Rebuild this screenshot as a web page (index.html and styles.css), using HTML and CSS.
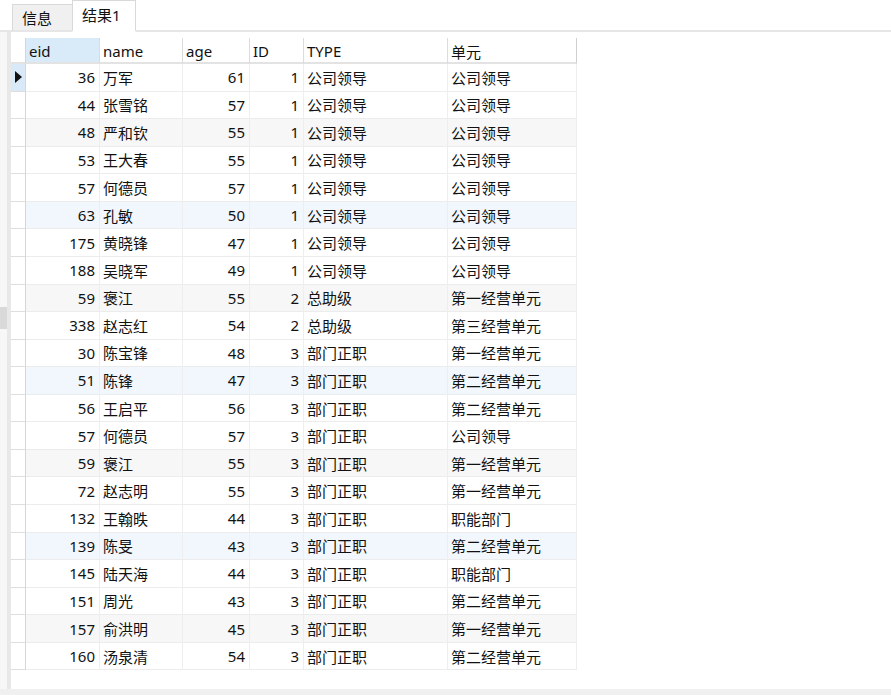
FILE: index.html
```html
<!DOCTYPE html>
<html lang="zh">
<head>
<meta charset="utf-8">
<title>结果1</title>
<link rel="stylesheet" href="styles.css">
</head>
<body>
<div class="app">
  <div class="tabbar">
    <div class="tab">信息</div>
    <div class="tab active">结果1</div>
  </div>
  <div class="main">
    <div class="gutter"><div class="handle"></div></div>
    <div class="panel">
      <div class="grid">
        <div class="row head">
          <div class="c ind"></div>
          <div class="c sel">eid</div>
          <div class="c">name</div>
          <div class="c">age</div>
          <div class="c">ID</div>
          <div class="c">TYPE</div>
          <div class="c">单元</div>
        </div>
        <div class="row"><div class="c ind cur"><span class="tri"></span></div><div class="c num">36</div><div class="c">万军</div><div class="c num">61</div><div class="c num">1</div><div class="c">公司领导</div><div class="c">公司领导</div></div>
        <div class="row"><div class="c ind"></div><div class="c num">44</div><div class="c">张雪铭</div><div class="c num">57</div><div class="c num">1</div><div class="c">公司领导</div><div class="c">公司领导</div></div>
        <div class="row gray"><div class="c ind"></div><div class="c num">48</div><div class="c">严和钦</div><div class="c num">55</div><div class="c num">1</div><div class="c">公司领导</div><div class="c">公司领导</div></div>
        <div class="row"><div class="c ind"></div><div class="c num">53</div><div class="c">王大春</div><div class="c num">55</div><div class="c num">1</div><div class="c">公司领导</div><div class="c">公司领导</div></div>
        <div class="row"><div class="c ind"></div><div class="c num">57</div><div class="c">何德员</div><div class="c num">57</div><div class="c num">1</div><div class="c">公司领导</div><div class="c">公司领导</div></div>
        <div class="row blue"><div class="c ind"></div><div class="c num">63</div><div class="c">孔敏</div><div class="c num">50</div><div class="c num">1</div><div class="c">公司领导</div><div class="c">公司领导</div></div>
        <div class="row"><div class="c ind"></div><div class="c num">175</div><div class="c">黄晓锋</div><div class="c num">47</div><div class="c num">1</div><div class="c">公司领导</div><div class="c">公司领导</div></div>
        <div class="row"><div class="c ind"></div><div class="c num">188</div><div class="c">吴晓军</div><div class="c num">49</div><div class="c num">1</div><div class="c">公司领导</div><div class="c">公司领导</div></div>
        <div class="row gray"><div class="c ind"></div><div class="c num">59</div><div class="c">褒江</div><div class="c num">55</div><div class="c num">2</div><div class="c">总助级</div><div class="c">第一经营单元</div></div>
        <div class="row"><div class="c ind"></div><div class="c num">338</div><div class="c">赵志红</div><div class="c num">54</div><div class="c num">2</div><div class="c">总助级</div><div class="c">第三经营单元</div></div>
        <div class="row"><div class="c ind"></div><div class="c num">30</div><div class="c">陈宝锋</div><div class="c num">48</div><div class="c num">3</div><div class="c">部门正职</div><div class="c">第一经营单元</div></div>
        <div class="row blue"><div class="c ind"></div><div class="c num">51</div><div class="c">陈锋</div><div class="c num">47</div><div class="c num">3</div><div class="c">部门正职</div><div class="c">第二经营单元</div></div>
        <div class="row"><div class="c ind"></div><div class="c num">56</div><div class="c">王启平</div><div class="c num">56</div><div class="c num">3</div><div class="c">部门正职</div><div class="c">第二经营单元</div></div>
        <div class="row"><div class="c ind"></div><div class="c num">57</div><div class="c">何德员</div><div class="c num">57</div><div class="c num">3</div><div class="c">部门正职</div><div class="c">公司领导</div></div>
        <div class="row gray"><div class="c ind"></div><div class="c num">59</div><div class="c">褒江</div><div class="c num">55</div><div class="c num">3</div><div class="c">部门正职</div><div class="c">第一经营单元</div></div>
        <div class="row"><div class="c ind"></div><div class="c num">72</div><div class="c">赵志明</div><div class="c num">55</div><div class="c num">3</div><div class="c">部门正职</div><div class="c">第一经营单元</div></div>
        <div class="row"><div class="c ind"></div><div class="c num">132</div><div class="c">王翰昳</div><div class="c num">44</div><div class="c num">3</div><div class="c">部门正职</div><div class="c">职能部门</div></div>
        <div class="row blue"><div class="c ind"></div><div class="c num">139</div><div class="c">陈旻</div><div class="c num">43</div><div class="c num">3</div><div class="c">部门正职</div><div class="c">第二经营单元</div></div>
        <div class="row"><div class="c ind"></div><div class="c num">145</div><div class="c">陆天海</div><div class="c num">44</div><div class="c num">3</div><div class="c">部门正职</div><div class="c">职能部门</div></div>
        <div class="row"><div class="c ind"></div><div class="c num">151</div><div class="c">周光</div><div class="c num">43</div><div class="c num">3</div><div class="c">部门正职</div><div class="c">第二经营单元</div></div>
        <div class="row gray"><div class="c ind"></div><div class="c num">157</div><div class="c">俞洪明</div><div class="c num">45</div><div class="c num">3</div><div class="c">部门正职</div><div class="c">第一经营单元</div></div>
        <div class="row"><div class="c ind"></div><div class="c num">160</div><div class="c">汤泉清</div><div class="c num">54</div><div class="c num">3</div><div class="c">部门正职</div><div class="c">第二经营单元</div></div>
      </div>
    </div>
  </div>
  <div class="statusbar"></div>
</div>
</body>
</html>
```
FILE: styles.css
```css
* { box-sizing: border-box; }
html, body { margin: 0; padding: 0; }
body {
  background: #ffffff;
  font-family: "Noto Sans", "Noto Sans CJK SC", sans-serif;
  font-size: 15px;
  color: #111111;
}
.app {
  width: 891px;
  height: 695px;
  display: flex;
  flex-direction: column;
  overflow: hidden;
}
.tabbar {
  height: 32px;
  flex: none;
  display: flex;
  align-items: flex-end;
  padding-left: 12px;
  border-bottom: 2px solid #e6e6e6;
}
.tab {
  height: 28px;
  width: 61px;
  margin-bottom: -2px;
  padding-left: 9px;
  line-height: 26px;
  background: #f0f0f0;
  border: 1px solid #d9d9d9;
  border-bottom: 2px solid #e6e6e6;
  font-size: 15px;
}
.tab.active {
  height: 32px;
  width: 64px;
  margin-left: -1px;
  line-height: 28px;
  background: #ffffff;
  border-bottom: 2px solid #ffffff;
  padding-left: 9px;
}
.main {
  flex: 1;
  display: flex;
  min-height: 0;
}
.gutter {
  width: 7px;
  flex: none;
  background: #f7f7f7;
  display: flex;
  flex-direction: column;
}
.handle {
  margin-top: 275px;
  height: 22px;
  width: 7px;
  background: #d9d9d9;
}
.panel {
  flex: 1;
  background: #ffffff;
  border-left: 4px solid #e8e8e8;
  padding-top: 6px;
}
.grid {
  display: flex;
  flex-direction: column;
  width: 566px;
}
.row {
  display: grid;
  grid-template-columns: 15px 74px 83px 67px 54px 144px 129px;
  height: 27.57px;
}
.c {
  border-right: 1px solid #eeeeee;
  border-bottom: 1px solid #ececec;
  padding: 0 4px 0 3px;
  white-space: nowrap;
  overflow: hidden;
  display: flex;
  align-items: center;
}
.c.num { justify-content: flex-end; }
.row.gray .c { background: #f7f7f7; }
.row.blue .c { background: #f1f7fd; }
.row .c.ind {
  background: #ffffff;
  border-right: 1px solid #d6d6d6;
  border-bottom: 1px solid #dedede;
  padding: 0;
}
.row .c.ind.cur {
  background: #d9e9f8;
  justify-content: center;
}
.tri {
  width: 0;
  height: 0;
  border-top: 6px solid transparent;
  border-bottom: 6px solid transparent;
  border-left: 7px solid #111111;
  margin-left: 1px;
}
.row.head { height: 26px; }
.row.head .c {
  border-right: 1px solid #dcdcdc;
  border-bottom: 2px solid #e3e3e3;
  padding-left: 3px;
  padding-top: 2px;
}
.row.head .c.ind { border-right: 1px solid #d6d6d6; }
.row.head .c.sel { background: #d9eaf8; }
.row.head .c:last-child { border-right: 1px solid #d0d0d0; }
.statusbar {
  height: 6px;
  flex: none;
  background: #f0f0f0;
}
```
